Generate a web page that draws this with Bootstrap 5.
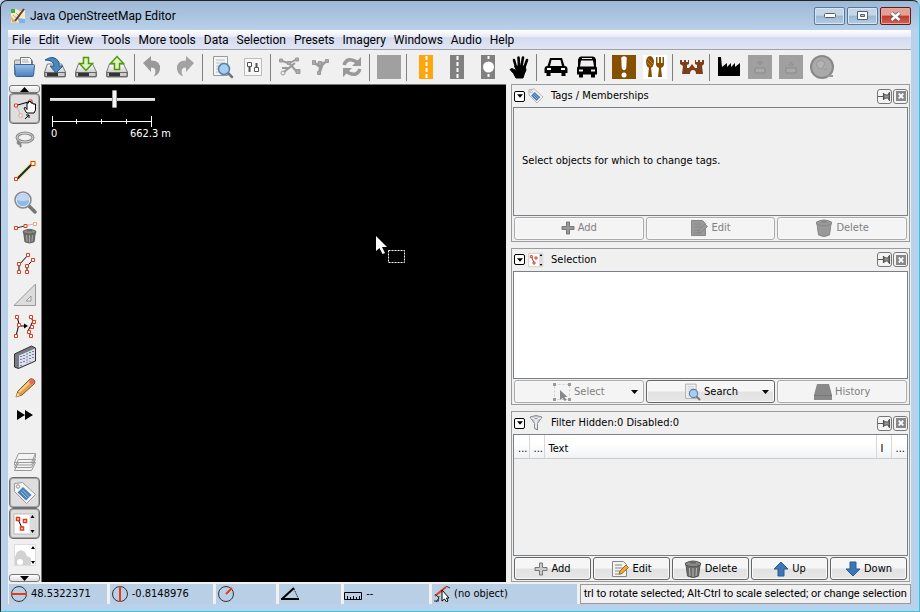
<!DOCTYPE html>
<html lang="en">
<head>
<meta charset="utf-8">
<meta name="viewport" content="width=device-width, initial-scale=1">
<title>Java OpenStreetMap Editor</title>
<link href="https://cdn.jsdelivr.net/npm/bootstrap@5.3.0/dist/css/bootstrap.min.css" rel="stylesheet">
<style>
body{font:11px/14px "DejaVu Sans Condensed","Noto Sans",sans-serif;color:#000;background:#b9d1ea}
svg{display:block;flex:none}
button{font:inherit;color:inherit}
.win{border:1px solid #222;border-right-color:#35c8e2;border-bottom-color:#35c8e2;border-radius:7px 7px 0 0;background:linear-gradient(#9db8d6,#b9d1ea 30px);padding:1px 8px 7px 7px}
.titlebar{height:28px;padding-left:2px;font:12px/16px Roboto,"Open Sans",sans-serif}
.wbtn{width:31px;height:18px;border:1px solid #5d7694;border-radius:2px;padding:0;box-shadow:inset 0 0 0 1px #d8e6f4;background:linear-gradient(#c4d6ea 45%,#9cb7d3 50%,#b4cde4)}
.wbtn.wclose{border-color:#5b1d20;box-shadow:inset 0 0 0 1px #e8a79c;background:linear-gradient(#e3a093 45%,#c23a2b 50%,#d0634f)}
.menubar{height:20px;background:linear-gradient(#fff,#e8ebf6 35%,#d5dbef 40%,#e0e5f4);border-bottom:1px solid #a0a0a8;font:12px/20px Roboto,"Open Sans",sans-serif}
.menubar a{color:#000;text-decoration:none;padding:0 4px;white-space:nowrap}
.toolbar-x{height:34px;background:#f0f0f0}
.tb{width:31px;height:31px;border:0;background:none;padding:0;display:flex;align-items:center;justify-content:center;flex:none}
.vsep{width:6px;height:27px;flex:none;background:linear-gradient(#808080,#808080) 2px 0/1px 100% no-repeat}
.work{background:#f0f0f0;min-height:0}
.side{width:34px;flex:none;padding-top:1px;border-right:1px solid #777}
.side .tb.on{border:1px solid #6e6e6e;box-shadow:inset 0 0 0 1px #a8a8a8;border-radius:4px;background:#dedede}
.side .ff{height:23px}
.arrowbtn{width:31px;height:8px;flex:none;padding:0;border:1px solid #777;border-radius:3px;background:linear-gradient(#fff,#ddd);display:flex;align-items:center;justify-content:center}
.map{background:#000;color:#fff;border-top:1px solid #777;padding:5px 0 0 8px}
.zoomer{appearance:none;width:105px;height:18px;margin:0;background:linear-gradient(#f4f4f4,#c9c9c9) 0 8px/100% 3px no-repeat;display:block}
.zoomer::-webkit-slider-thumb{appearance:none;width:5px;height:18px;border:1px solid #999;border-radius:1px;background:#f4f4f4}
.scale-t{width:121px;padding-left:1px}
.pointer{left:72%;top:151px}
.dialogs{flex:0 0 405px;padding:0 1px 0 5px;gap:6px}
.dlg{border:1px solid #9c9c9c;padding:0 1px 1px;flex:157 1 0;min-height:0}
.dlg.tall{flex-grow:170}
.dlg h2{font:inherit;margin:0}
.dhead{height:22px;flex:none;gap:3px;padding-left:1px}
.dbody{border:1px solid #7a8088}
.mini{border:1px solid #777;border-radius:3px;width:15px;height:15px;padding:0;background:#f4f4f4;display:flex;align-items:center;justify-content:center}
.mini.sq{width:11px;height:11px;border:1px solid #000;border-radius:2px;background:#fff}
.minis{gap:1px}
.acts{padding:1px 1px 0;gap:2px}
.act{flex:1 1 0;height:23px;border:1px solid #666;border-radius:3px;box-shadow:inset 0 0 0 1px #fafafa;background:linear-gradient(#f6f6f6 48%,#e2e2e2 52%,#e6e6e6);padding:0;gap:3px;position:relative}
.act:disabled{border-color:#aaa;color:#808080;background:#f4f4f4}
.act .caret{position:absolute;right:5px;color:#000}
.ftab{width:100%;table-layout:fixed;border-collapse:collapse}
.ftab th{font-weight:400;height:23px;padding:4px 0 0 4px;border-right:1px solid #d8d8d8;border-bottom:1px solid #ccc;background:linear-gradient(#fff 35%,#f1f2f4);white-space:nowrap;overflow:hidden;text-align:left;line-height:14px}
.ftab th:last-child{border-right:0}
.status{display:grid;grid-template-columns:98fr 103fr 61fr 62fr 85fr 145fr 332fr;gap:3px;background:#f0f0f0;padding:2px 0 0 1px}
.cell{height:20px;background:#b8cfe5;padding:0 2px;gap:4px;min-width:0;overflow:hidden;white-space:nowrap}
.cell.tip{background:#f0f0f0;border:1px solid #999;padding:0 3px;font-family:Roboto,"Open Sans",sans-serif}
</style>
<script src="https://cdn.jsdelivr.net/npm/bootstrap@5.3.0/dist/js/bootstrap.bundle.min.js"></script>
</head>
<body>
<svg width="0" height="0" class="position-absolute" aria-hidden="true">
<defs>
<linearGradient id="gd" x2="0" y2="1"><stop stop-color="#fff"/><stop offset="1" stop-color="#b4b4b4"/></linearGradient>
<linearGradient id="gb" x2="0" y2="1"><stop stop-color="#9bc0e6"/><stop offset="1" stop-color="#4a7fbc"/></linearGradient>
<symbol id="drive" viewBox="0 0 24 24"><path d="M4.500 9h14l4 8v4q0 1-1 1h-19q-1 0-1-1v-4z" fill="url(#gd)" stroke="#777"/><path d="M2 17.500h20v4h-20z" fill="#ccc" stroke="#666" /><path d="M4 18h11v3h-11z" fill="#333"/></symbol>
<symbol id="lens" viewBox="0 0 24 24"><path d="M16 16l6 6" stroke="#777" stroke-width="3.500" stroke-linecap="round"/><circle cx="10" cy="10" r="8" fill="#8fb9e6" stroke="#8a8a8a" stroke-width="1.500"/><circle cx="10" cy="10" r="6.700" fill="none" stroke="#e4e8ec"/><path d="M4 10a6 6 0 0 1 12 0q-6 2-12 0" fill="#c0d8f2"/></symbol>
<symbol id="tag" viewBox="0 0 24 24"><path d="M1.500 2.500l8-1 13 12-9 9-12-12z" fill="#f4f4f4" stroke="#999"/><circle cx="5" cy="5.500" r="1.700" fill="#fff" stroke="#999"/><path d="M10 6l8.500 8-5.500 5.500-8.500-8z" fill="#4b80b7"/><path d="M9.500 9l7 7M8 11l6 6" stroke="#9fc0e0"/></symbol>
<symbol id="sel" viewBox="0 0 24 24"><path d="M1 2h21v20h-21z" fill="#fff" stroke="#bbb"/><path d="M16.500 2h6v20h-6z" fill="#ddd"/><path d="M17.500 6l2-3 2 3zM17.500 18l2 3 2-3z"/><path d="M5 7l4 9" stroke="#000"/><path d="M3.500 5.500h3v3h-3zM10.500 7.500h3v3h-3zM7.500 15h3v3h-3z" fill="#fff" stroke="#e03a20" stroke-width="1.500"/></symbol>
<symbol id="pin" viewBox="0 0 13 11"><path d="M0 5.500h5M5.500 2v7M11.500 1v9" fill="none" stroke="#555" stroke-width="1.200"/><path d="M6 3l2 1h2l1-2v7l-1-2h-2l-2 1z" fill="#999" stroke="#555"/></symbol>
<symbol id="xx" viewBox="0 0 11 11"><path d="M0 0h11v11h-11z" fill="#888"/><path d="M3 3l5 5M8 3l-5 5" stroke="#fff" stroke-width="2"/></symbol>
<symbol id="down" viewBox="0 0 7 4"><path d="M0 0h7l-3.500 4z"/></symbol>
<symbol id="plus" viewBox="0 0 14 14"><path d="M5.500 1h3v4.500h4.500v3h-4.500v4.500h-3v-4.500h-4.500v-3h4.500z" fill="var(--f,#ccc)" stroke="#777"/></symbol>
<symbol id="edit" viewBox="0 0 18 18"><path d="M1.500 1.500h11l3 3v12h-14z" fill="var(--f,#f3f3f3)" stroke="#888"/><path d="M4 5h7M4 8h8M4 11h6M4 14h6" stroke="#888"/><path d="M8 14l1-3 6-6 2.500 2.500-6.500 6z" fill="var(--p,#f2a93b)" stroke="var(--q,#a66a16)"/></symbol>
<symbol id="bin" viewBox="0 0 18 18"><path d="M2 5h14l-1.500 11q-5.500 3-11 0z" fill="var(--f,#6c6c68)" stroke="var(--k,#555)"/><path d="M5.500 8l.5 8M9 8v9M12.500 8l-.5 8" stroke="var(--p,#bbb)"/><path d="M1.500 5v-2q7.500-4 15 0v2q-7.500 3.500-15 0z" fill="var(--f,#8a8a85)" stroke="var(--k,#555)"/><path d="M6 2.500h6" stroke="var(--k,#666)" stroke-width="2"/></symbol>
<symbol id="doc" viewBox="0 0 24 24"><path d="M3.500 1.500h14v19h-14z" fill="#f5f5f5" stroke="#999"/><path d="M6 5h9M6 8h9M6 11h3M6 14h3M6 17h3" stroke="#bbb"/><path d="M18 18l4 4" stroke="#777" stroke-width="2.500" stroke-linecap="round"/><circle cx="14" cy="14" r="5.500" fill="#a9cdf0" stroke="#5580aa" stroke-width="1.500"/></symbol>
</defs></svg>

<div class="win min-vh-100 d-flex flex-column">
<header class="titlebar d-flex align-items-center">
  <svg width="16" height="16" viewBox="0 0 16 16"><path d="M1 2l5-1 4 2 5-1v12l-5 1-5-1-4 1z" fill="#f3ecc8"/><path d="M1 1h4v4h-4z" fill="#3fae3f"/><path d="M8 10l7 1v4h-6z" fill="#7db4ea"/><path d="M1 8l4 6h-3z" fill="#e99b3c"/><path d="M3 7l7 6M6 5l4 4" stroke="#d98"/><path d="M5 13l9-12" stroke="#6a3b20" stroke-width="2"/></svg>
  <span class="ms-1 me-auto">Java OpenStreetMap Editor</span>
  <div class="d-flex" style="gap:2px">
    <button class="wbtn d-flex align-items-center justify-content-center" aria-label="Minimize"><svg width="12" height="6"><rect x=".5" y=".5" width="11" height="4" rx="1" fill="#fff" stroke="#555e70"/></svg></button>
    <button class="wbtn d-flex align-items-center justify-content-center" aria-label="Maximize"><svg width="11" height="10"><path d="M.5.500h10v8h-10zM3.500 3.500h4v2h-4z" fill="#fff" fill-rule="evenodd" stroke="#555e70"/></svg></button>
    <button class="wbtn wclose d-flex align-items-center justify-content-center" aria-label="Close"><svg width="13" height="11" viewBox="0 0 13 11"><path d="M2.500 2l8 7M10.500 2l-8 7" stroke="#555e70" stroke-width="4"/><path d="M2.500 2l8 7M10.500 2l-8 7" stroke="#fff" stroke-width="2.400"/></svg></button>
  </div>
</header>
<nav class="menubar d-flex"><a href="#">File</a><a href="#">Edit</a><a href="#">View</a><a href="#">Tools</a><a href="#">More tools</a><a href="#">Data</a><a href="#">Selection</a><a href="#">Presets</a><a href="#">Imagery</a><a href="#">Windows</a><a href="#">Audio</a><a href="#">Help</a></nav>
<div class="toolbar-x d-flex align-items-center" role="toolbar">
  <button class="tb" aria-label="Open"><svg width="24" height="24"><path d="M2.500 20v-14q0-1 1-1h5v-2h9l3 3v8" fill="#d6d6d6" stroke="#888"/><path d="M8.500 10v-7.500h9l2 2v6" fill="#fafafa" stroke="#777"/><path d="M10 5h6M10 7h7" stroke="#aaa"/><path d="M3.500 9.500h18q1 0 1 1l-1 10q0 1-1 1h-16q-1 0-1-1l-1-10q0-1 1-1z" fill="url(#gb)" stroke="#34649c"/></svg></button>
  <button class="tb" aria-label="Save"><svg width="24" height="24"><use href="#drive"/><path d="M2 5q9-6 14 2v4h4l-7 7-6-7h4q0-6-9-6z" fill="#4b87bd" stroke="#245b8e"/></svg></button>
  <button class="tb" aria-label="Download"><svg width="24" height="24"><use href="#drive"/><path d="M9.500 2.500h5v6h4l-6.500 7-6.500-7h4z" fill="#dff5c4" stroke="#4e9a06" stroke-width="1.500"/></svg></button>
  <button class="tb" aria-label="Upload"><svg width="24" height="24"><use href="#drive"/><path d="M9.500 14.500h5v-6h4l-6.500-7-6.500 7h4z" fill="#dff5c4" stroke="#4e9a06" stroke-width="1.500"/></svg></button>
  <span class="vsep"></span>
  <button class="tb" aria-label="Undo"><svg width="24" height="24"><path d="M1 8l8-7v4.500q10 0 9 9-1 5-6 7 4-9-3-9v4.500z" fill="#999"/></svg></button>
  <button class="tb" aria-label="Redo"><svg width="24" height="24"><path d="M21 8l-8-7v4.500q-10 0-9 9 1 5 6 7-4-9 3-9v4.500z" fill="#a2a2a2"/></svg></button>
  <span class="vsep"></span>
  <button class="tb" aria-label="Search"><svg width="24" height="24"><use href="#doc"/></svg></button>
  <button class="tb" aria-label="Preferences"><svg width="24" height="24"><path d="M3.500 3.500h17v17h-17z" fill="#f8f8f8" stroke="#bbb"/><path d="M8.500 8v9M15.500 8v9" stroke="#555" stroke-width="2"/><path d="M6.500 7.500h4v4h-4zM13.500 12.500h4v4h-4z" fill="#fff" stroke="#555"/></svg></button>
  <span class="vsep"></span>
  <button class="tb" aria-label="Split way"><svg width="24" height="24" fill="none" stroke="#999"><path d="M3 5.500l8 3 8-4.500M11 8l8 9M6 17l11-9M4 13h8" stroke-width="2"/><path d="M1.500 4h3v3h-3zM9.500 6.500h3v3h-3zM17.500 3h3v3h-3zM18 14.500h4v4h-4z" fill="#aaa"/><circle cx="5" cy="18" r="2"/></svg></button>
  <button class="tb" aria-label="Combine way"><svg width="24" height="24" fill="#aaa" stroke="#999"><path d="M5 8l6 4 7-6M11 12l-1 6M14 9l-3 8" stroke-width="2"/><path d="M3.500 5.500h3v4h-3zM16.500 4.500h3v3h-3zM9.500 6.500h3v4h-3zM8.500 16.500h3v3h-3z"/></svg></button>
  <button class="tb" aria-label="Update"><svg width="24" height="24" fill="none" stroke="#999" stroke-width="3.500"><path d="M4 10q3-8 11-4l3 2M20 14q-3 8-11 4l-3-2"/><path d="M21 2v9h-9zM3 22v-9h9z" fill="#999" stroke="none"/></svg></button>
  <span class="vsep"></span>
  <button class="tb" aria-label="Preset"><svg width="24" height="24"><path d="M0 0h24v24H0z" fill="#a0a0a0"/></svg></button>
  <span class="vsep"></span>
  <button class="tb" aria-label="Motorway"><svg width="24" height="24"><path d="M5 0h14v24H5z" fill="#ffa50d"/><path d="M12.500 1v24" stroke="#fff" stroke-width="2" stroke-dasharray="4 2"/></svg></button>
  <button class="tb" aria-label="Road"><svg width="24" height="24"><path d="M5 0h14v24H5z" fill="#808080"/><path d="M12.500 1v24" stroke="#fff" stroke-width="2" stroke-dasharray="4 2"/></svg></button>
  <button class="tb" aria-label="Roundabout"><svg width="24" height="24"><path d="M5 0h14v24H5z" fill="#808080"/><path d="M12.500 1v24" stroke="#fff" stroke-width="2" stroke-dasharray="3 3"/><circle cx="12.500" cy="12" r="5.500" fill="#fff"/></svg></button>
  <button class="tb" aria-label="Barrier"><svg width="24" height="24" stroke="#000" stroke-linecap="round" stroke-linejoin="round"><path d="M9 12l-2-7M12 11l-.5-8.500M14.500 11l1.500-8.500M17.500 12l2.500-7" stroke-width="2.600"/><path d="M8 11h10l1 4q-2 4-3 8h-7q-2-5-6-8.500l2-1 4 2z" stroke-width="1"/></svg></button>
  <span class="vsep"></span>
  <button class="tb" aria-label="Car"><svg width="24" height="24"><path d="M6 3h12l2.500 8q3 0 3 3v4h-2v3h-4v-3H6.500v3h-4v-3h-2v-4q0-3 3-3zM7.500 5L6 11h12l-1.500-6z" fill-rule="evenodd"/><path d="M3 13h4v2H3zM17 13h4v2h-4z" fill="#fff"/></svg></button>
  <button class="tb" aria-label="Bus"><svg width="24" height="24"><path d="M6 1.500h12q2 0 3 3v7l1 1v7h-2v3h-4v-3H8v3H4v-3H2v-7l1-1v-7q1-3 3-3zM7 3v1h10V3zM6 5.500l-1 6h14l-1-6zM4 14.500v2h4v-2zM16 14.500v2h4v-2z" fill-rule="evenodd"/></svg></button>
  <span class="vsep"></span>
  <button class="tb" aria-label="Attraction"><svg width="24" height="24"><path d="M0 0h24v24H0z" fill="#875000"/><path d="M10 3q2-2 4 0l-.5 10q-1.500 3-3 0z" fill="#fff" stroke="#fff" stroke-width="1.500"/><circle cx="12" cy="20" r="2.500" fill="#fff"/></svg></button>
  <button class="tb" aria-label="Restaurant"><svg width="24" height="24"><path d="M0 0h24v24H0z" fill="#fff"/><g fill="#875000"><ellipse cx="7" cy="7" rx="4" ry="6"/><path d="M6 12h2l1 10H5zM13 2h1.500v6h1.500V2h2v6h1.500V2H21v8q-1 3-3 3l1 9h-4l1-9q-2 0-3-3z"/></g><path d="M4 7l4 4M5 4l5 5" stroke="#b98b4b"/></svg></button>
  <span class="vsep"></span>
  <button class="tb" aria-label="Castle"><svg width="24" height="24"><path d="M0 5h2v2h2V5h2v2h2V5h1v4l-2 1v3h2l3-4 3 4h2v-3l-2-1V5h1v2h2V5h2v2h2V5h2v4l-2 2 1 8h-7q0-4-3-4t-3 4H2l1-8-3-2z" fill="#7b3f1c"/></svg></button>
  <span class="vsep"></span>
  <button class="tb" aria-label="Industry"><svg width="24" height="24"><path d="M1 2h3l1 10 5-4v4l4-4v4l4-4v4l5-4v13H1z"/></svg></button>
  <button class="tb" aria-label="Import"><svg width="24" height="24"><path d="M0 0h24v24H0z" fill="#a0a0a0"/><path d="M7 13h10v5H7zM10 7h4l-2 3z" fill="#aaa" stroke="#8a8a8a"/></svg></button>
  <button class="tb" aria-label="Export"><svg width="24" height="24"><path d="M0 0h24v24H0z" fill="#a0a0a0"/><path d="M7 13h10v5H7zM10 10h4l-2-3z" fill="#aaa" stroke="#8a8a8a"/></svg></button>
  <button class="tb" aria-label="Imagery"><svg width="24" height="24"><circle cx="12" cy="12" r="11" fill="#aaa" stroke="#888" stroke-width="2"/><path d="M18 20h5v2h-6z" fill="#999"/><path d="M6 8l5-3 4 3-3 6-4-1zM14 15l4-2" fill="#b4b4b4" stroke="#999"/></svg></button>
</div>
<main class="work d-flex flex-grow-1">
  <aside class="side d-flex flex-column align-items-center">
    <button class="arrowbtn" aria-label="Scroll up"><svg width="9" height="5"><path d="M0 5h9L4.500 0z"/></svg></button>
    <button class="tb on" aria-label="Select"><svg width="24" height="24"><path d="M3 8.500l14-4" stroke="#000"/><path d="M3 9l5 9" stroke="#bbb"/><path d="M1.500 7h3v3h-3zM16 3h3v3h-3z" fill="#fff" stroke="#e03a20"/><path d="M6 17h3v3H6z" fill="#fff" stroke="#f0a090"/><path d="M13 15l-2-4 1.500-.5 1.500 2V6h1.500V4.500H18V6h2v1h2.500v6l-1.500 3h-7z" fill="#fff" stroke="#000"/><path d="M12 22l4-4M13 18h3v3" stroke="#000" fill="none"/></svg></button>
    <button class="tb" aria-label="Lasso"><svg width="24" height="24" fill="none" stroke="#888"><ellipse cx="12" cy="9.500" rx="8" ry="4.500" stroke-width="3"/><ellipse cx="12" cy="9.500" rx="8" ry="4.500" stroke="#ddd"/><path d="M6 13q-3 2 0 3t1 3M4 14l4 2" stroke-width="2"/></svg></button>
    <button class="tb" aria-label="Draw"><svg width="24" height="24"><path d="M4 20L20 4" stroke="#f4f060" stroke-width="4"/><path d="M17 1.500h6v6h-6z" fill="#f4f060"/><path d="M4 20L20 4" stroke="#102060" stroke-width="2"/><path d="M1.500 18.500h3v3h-3zM18 2.500h4v4h-4z" fill="#fff" stroke="#e03a20"/></svg></button>
    <button class="tb" aria-label="Zoom"><svg width="24" height="24"><use href="#lens"/></svg></button>
    <button class="tb" aria-label="Delete mode"><svg width="24" height="24"><path d="M3 7l11-2.500" stroke="#333"/><path d="M14 4.500l8-2" stroke="#bbb"/><path d="M1.500 5.500h3v3h-3z" fill="#fff" stroke="#e03a20"/><path d="M20.500 1.500h3v3h-3z" fill="#fff" stroke="#f0a090"/><use href="#bin" x="9" y="7" width="15" height="16"/><path d="M11 3.500h3v3h-3z" fill="#fff" stroke="#e03a20"/></svg></button>
    <button class="tb" aria-label="Parallel"><svg width="24" height="24"><path d="M6 20v-7l9-10M14 20v-6l6-6" stroke="#000" fill="none"/><path d="M4.500 18.500h3v3h-3zM4.500 10.500h3v3h-3zM13.500 1.500h3v3h-3zM18.500 6.500h3v3h-3zM12.500 12.500h3v3h-3zM12.500 18.500h3v3h-3z" fill="#fff" stroke="#e03a20"/></svg></button>
    <button class="tb" aria-label="Extrude"><svg width="24" height="24"><path d="M1 22.500h21.500V1zM13 18h5v-5z" fill="#ddd" fill-rule="evenodd" stroke="#999"/></svg></button>
    <button class="tb" aria-label="Improve way"><svg width="24" height="24"><path d="M4 2l2 8-3 12M17 2l3 5-5 10 3 5M8 12h5" stroke="#000" fill="none"/><path d="M11 9.500l4 2.500-4 2.500z"/><path d="M2.500 1.500h3v3h-3zM4.500 9.500h3v3h-3zM1.500 20.500h3v3h-3zM16.500 1.500h3v3h-3zM19.500 6.500h3v3h-3zM17.500 11.500h3v3h-3zM14.500 16.500h3v3h-3zM16.500 20.500h3v3h-3z" fill="#fff" stroke="#e03a20"/></svg></button>
    <button class="tb" aria-label="Building"><svg width="24" height="24"><path d="M1.500 9l17-8 4 2v13l-17 7.500-4-1.500z" fill="#777b85" stroke="#333"/><path d="M6 10.500L22 3.500V15.500L6 22.500z" fill="#dcdff0"/><path d="M8 11v10M11 10v9M14 8.500v9.500M17 7v9.500M20 6v9" stroke="#223" stroke-dasharray="1 2"/></svg></button>
    <button class="tb" aria-label="Pencil"><svg width="24" height="24"><path d="M3 21l2-6L17 3q2-1 4 1t0 4L9 19z" fill="#e2a04a" stroke="#8a5418"/><path d="M6 16L18 5" stroke="#f6cf88" stroke-width="2"/><path d="M17 3.500q5 0 4 4l-3 1-2-2z" fill="#e66a6a"/><path d="M3 21l1.500-4 2.500 2.500z" fill="#f6dcb0"/></svg></button>
    <button class="tb ff" aria-label="More modes"><svg width="16" height="10"><path d="M0 0l8 5-8 5zM8 0l8 5-8 5z"/></svg></button>
    <span class="flex-grow-1"></span>
    <button class="tb" aria-label="Layers"><svg width="24" height="24" fill="#f4f4f4" stroke="#999"><path d="M1.500 20.500l4-8h17l-4 8zM1.500 17.500l4-8h17l-4 8zM1.500 12.500l4-9h17l-4 9zv2.500h17l4-8v-3"/></svg></button>
    <button class="tb on" aria-label="Tags panel"><svg width="24" height="24"><use href="#tag"/></svg></button>
    <button class="tb on" aria-label="Selection panel"><svg width="24" height="24"><use href="#sel"/></svg></button>
    <button class="tb" aria-label="Relations panel"><svg width="24" height="24"><path d="M1.500 1.500h21v21h-21z" fill="#fff" stroke="#ddd"/><path d="M2 14l2-5 4-2 4 2 2 4 4 2v7H2z" fill="#d2d2d2"/><circle cx="7" cy="19" r="3" fill="#fff"/><path d="M18 6l2-3 2 3zM18 18l2 3 2-3z"/></svg></button>
    <button class="arrowbtn mt-1" aria-label="Scroll down"><svg width="9" height="5"><path d="M0 0h9L4.500 5z"/></svg></button>
  </aside>
  <section class="map position-relative flex-grow-1">
    <input class="zoomer" type="range" min="0" max="100" value="62" aria-label="Zoom level">
    <svg class="mt-2" width="106" height="11" fill="none" stroke="#fff"><path d="M2.500 0v11M101.500 0v11M2 5.500h100M26.500 3v5M51.500 3v5M76.500 3v5"/></svg>
    <div class="scale-t d-flex justify-content-between"><span>0</span><span>662.3 m</span></div>
    <svg class="pointer position-absolute" width="30" height="28"><path d="M0 0v15l3.500-3 3 6 2.500-1-3-6h5z" fill="#fff"/><path d="M12.500 14.500h16v12h-16z" fill="none" stroke="#fff" stroke-dasharray="2 1"/></svg>
  </section>
  <div class="dialogs d-flex flex-column">
    <section class="dlg d-flex flex-column">
      <div class="dhead d-flex align-items-center"><button class="mini sq" aria-label="Collapse"><svg width="6" height="4"><use href="#down"/></svg></button><svg width="16" height="16"><use href="#tag"/></svg><h2 class="ms-1 me-auto">Tags / Memberships</h2><div class="minis d-flex"><button class="mini" aria-label="Pin"><svg width="13" height="11"><use href="#pin"/></svg></button><button class="mini" aria-label="Close"><svg width="10" height="10"><use href="#xx"/></svg></button></div></div>
      <div class="dbody flex-grow-1 d-flex align-items-center ps-2">Select objects for which to change tags.</div>
      <div class="acts d-flex" style="--f:#999;--p:#999;--q:#888;--k:#888"><button class="act d-flex align-items-center justify-content-center" disabled><svg width="14" height="14"><use href="#plus"/></svg>Add</button><button class="act d-flex align-items-center justify-content-center" disabled><svg width="18" height="18"><use href="#edit"/></svg>Edit</button><button class="act d-flex align-items-center justify-content-center" disabled><svg width="18" height="18"><use href="#bin"/></svg>Delete</button></div>
    </section>
    <section class="dlg d-flex flex-column">
      <div class="dhead d-flex align-items-center"><button class="mini sq" aria-label="Collapse"><svg width="6" height="4"><use href="#down"/></svg></button><svg width="16" height="16"><use href="#sel"/></svg><h2 class="ms-1 me-auto">Selection</h2><div class="minis d-flex"><button class="mini" aria-label="Pin"><svg width="13" height="11"><use href="#pin"/></svg></button><button class="mini" aria-label="Close"><svg width="10" height="10"><use href="#xx"/></svg></button></div></div>
      <div class="dbody flex-grow-1 bg-white"></div>
      <div class="acts d-flex"><button class="act d-flex align-items-center justify-content-center" disabled><svg width="18" height="18"><path d="M1.500 1.500h15v15h-15z" fill="none" stroke="#ccc" stroke-dasharray="2 2"/><path d="M0 0h3v3H0zM15 0h3v3h-3zM0 15h3v3H0zM15 15h3v3h-3z" fill="#999"/><path d="M7 7v10l2.500-2 2 3 2-1-2-3h3z" fill="#888"/></svg>Select<svg class="caret" width="7" height="4"><use href="#down"/></svg></button><button class="act d-flex align-items-center justify-content-center"><svg width="18" height="18"><use href="#doc"/></svg>Search<svg class="caret" width="7" height="4"><use href="#down"/></svg></button><button class="act d-flex align-items-center justify-content-center" disabled><svg width="18" height="18"><path d="M3 1h12l3 11v5H0v-5z" fill="#8a8a8a"/><path d="M0 12.500h18" stroke="#777"/></svg>History</button></div>
    </section>
    <section class="dlg tall d-flex flex-column">
      <div class="dhead d-flex align-items-center"><button class="mini sq" aria-label="Collapse"><svg width="6" height="4"><use href="#down"/></svg></button><svg width="16" height="16"><path d="M2 2q6-3 12 0L9.500 8.500V15l-3-1.500v-5z" fill="#cfd3dc" stroke="#888"/><path d="M3 3q5 2 10 0M8 5v8" stroke="#fff"/></svg><h2 class="ms-1 me-auto">Filter Hidden:0 Disabled:0</h2><div class="minis d-flex"><button class="mini" aria-label="Pin"><svg width="13" height="11"><use href="#pin"/></svg></button><button class="mini" aria-label="Close"><svg width="10" height="10"><use href="#xx"/></svg></button></div></div>
      <div class="dbody flex-grow-1"><table class="ftab"><colgroup><col width="15"><col width="15"><col><col width="15"><col width="16"></colgroup><thead><tr><th>...</th><th>...</th><th>Text</th><th>I</th><th>...</th></tr></thead></table></div>
      <div class="acts d-flex"><button class="act d-flex align-items-center justify-content-center"><svg width="14" height="14"><use href="#plus"/></svg>Add</button><button class="act d-flex align-items-center justify-content-center"><svg width="18" height="18"><use href="#edit"/></svg>Edit</button><button class="act d-flex align-items-center justify-content-center"><svg width="18" height="18"><use href="#bin"/></svg>Delete</button><button class="act d-flex align-items-center justify-content-center"><svg width="16" height="16"><path d="M8 1l7 7h-4v7H5V8H1z" fill="#3c76b6" stroke="#2a5a94"/></svg>Up</button><button class="act d-flex align-items-center justify-content-center"><svg width="16" height="16"><path d="M8 15l7-7h-4V1H5v7H1z" fill="#3c76b6" stroke="#2a5a94"/></svg>Down</button></div>
    </section>
  </div>
</main>
<footer class="status">
  <div class="cell d-flex align-items-center"><svg width="16" height="16"><circle cx="8" cy="8" r="7.500" fill="none" stroke="#333"/><path d="M0 8h16" stroke="#e83a18" stroke-width="2"/></svg>48.5322371</div>
  <div class="cell d-flex align-items-center"><svg width="16" height="16"><circle cx="8" cy="8" r="7.500" fill="none" stroke="#333"/><path d="M8 0v16" stroke="#e83a18" stroke-width="2"/></svg>-0.8148976</div>
  <div class="cell d-flex align-items-center"><svg width="16" height="16"><circle cx="8" cy="8" r="7.500" fill="none" stroke="#333"/><path d="M8 8l6-6" stroke="#e83a18" stroke-width="2"/></svg></div>
  <div class="cell d-flex align-items-center"><svg width="18" height="14"><path d="M0 12h18M1 12L13 1" stroke="#000" stroke-width="2"/><path d="M13 2l4 9" stroke="#000" stroke-dasharray="1 1"/></svg></div>
  <div class="cell d-flex align-items-center ps-0"><svg class="mt-1" width="18" height="8"><path d="M.5.500h17v7H.5zM3.500 7V4M6.500 7V5M9.500 7V4M12.500 7V5M15.500 7V4" fill="none" stroke="#000"/></svg>--</div>
  <div class="cell d-flex align-items-center"><svg width="16" height="16"><path d="M1 10L12 1" stroke="#e83a18" stroke-width="2"/><path d="M12 0l4 2M1 8l4 4-3 4M0 15h5M5 10l-1 5" stroke="#333" fill="none"/><path d="M8 4v11l2.500-2 2 3 1.500-1-1.500-3H15z" fill="#fff" stroke="#000"/></svg>(no object)</div>
  <div class="cell tip d-flex align-items-center">trl to rotate selected; Alt-Ctrl to scale selected; or change selection</div>
</footer>
</div>
</body>
</html>
